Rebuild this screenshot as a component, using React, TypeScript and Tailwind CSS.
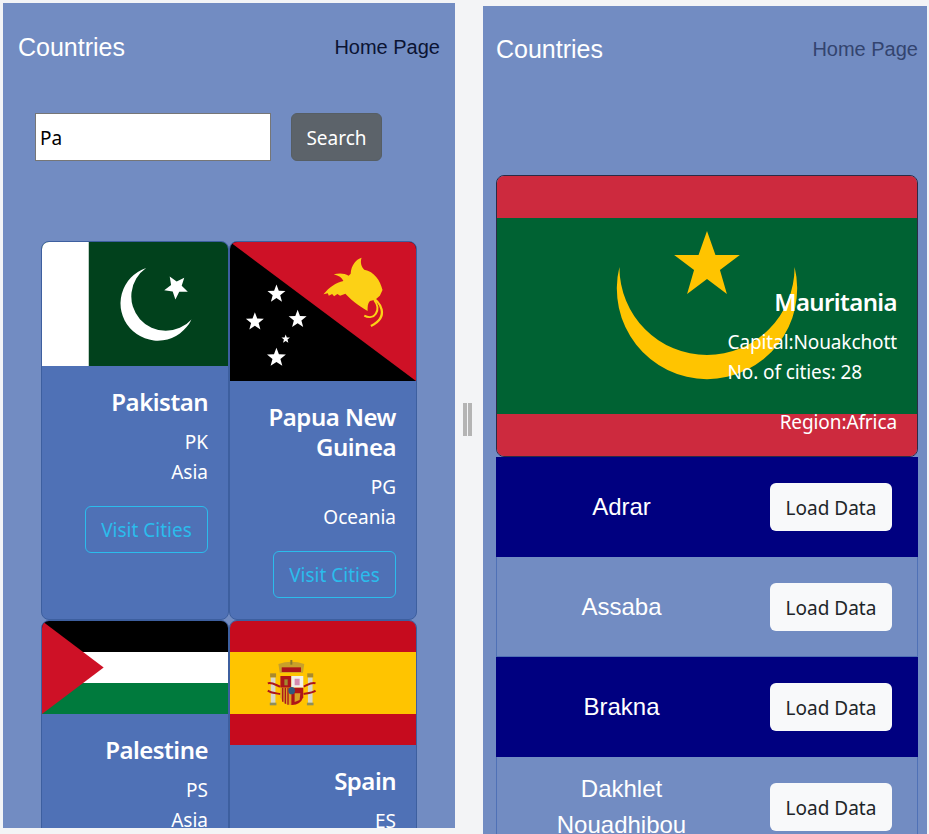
import React from 'react';

const BODY_FONT = "font-['Noto_Sans',sans-serif]";

const starPoints = (cx: number, cy: number, r: number, rot = 0, inner = 0.42) => {
  const pts: string[] = [];
  for (let i = 0; i < 10; i++) {
    const rad = i % 2 === 0 ? r : r * inner;
    const a = ((-90 + rot + i * 36) * Math.PI) / 180;
    pts.push(`${(cx + rad * Math.cos(a)).toFixed(2)},${(cy + rad * Math.sin(a)).toFixed(2)}`);
  }
  return pts.join(' ');
};

const PakistanFlag = () => (
  <svg viewBox="0 0 187 125" className="block w-full h-[124px]" preserveAspectRatio="none">
    <rect width="187" height="125" fill="#01411c" />
    <rect width="47" height="125" fill="#fff" />
    <path d="M104.7 26.3A37.5 37.5 0 1 0 150.3 78A34.7 34.7 0 1 1 104.7 26.3Z" fill="#fff" />
    <polygon points={starPoints(135, 45.5, 12.5, 40, 0.45)} fill="#fff" />
  </svg>
);

const PapuaFlag = () => (
  <svg viewBox="0 0 187 139" className="block w-full h-[139px]" preserveAspectRatio="none">
    <rect width="187" height="139" fill="#000" />
    <polygon points="0,0 187,0 187,139" fill="#ce1126" />
    <polygon points={starPoints(46.7, 52, 9.5)} fill="#fff" />
    <polygon points={starPoints(25, 79.7, 9.5)} fill="#fff" />
    <polygon points={starPoints(68, 77.3, 9.5)} fill="#fff" />
    <polygon points={starPoints(56, 97, 4.5)} fill="#fff" />
    <polygon points={starPoints(46.7, 115.7, 10)} fill="#fff" />
    <g transform="translate(70 3) scale(0.3333)">
      <path
        d="M187 38C172 42 155 60 154 86L148 92C135 84 118 84 103 88C118 92 128 98 132 108C110 112 88 128 72 148L85 145L88 152L98 147L104 154L114 147L122 152L138 146C150 160 175 180 205 198C205 185 205 175 212 168L228 164L242 152L250 135C243 105 225 80 195 74C186 65 182 50 187 38Z"
        fill="#fcd116"
      />
      <path d="M212 155C245 168 272 215 215 243" fill="none" stroke="#fcd116" strokeWidth="7" />
      <path d="M195 212C225 228 248 195 225 165" fill="none" stroke="#fcd116" strokeWidth="6" />
    </g>
  </svg>
);

const PalestineFlag = () => (
  <svg viewBox="0 0 187 93" className="block w-full h-[93px]" preserveAspectRatio="none">
    <rect width="187" height="31" fill="#000" />
    <rect y="31" width="187" height="31" fill="#fff" />
    <rect y="62" width="187" height="31" fill="#007a3d" />
    <polygon points="0,0 62,46.5 0,93" fill="#ce1126" />
  </svg>
);

const SpainFlag = () => (
  <svg viewBox="0 0 187 124" className="block w-full h-[124px]" preserveAspectRatio="none">
    <rect width="187" height="124" fill="#c60b1e" />
    <rect y="31" width="187" height="62" fill="#ffc400" />
    <g transform="translate(20 19) scale(0.3333)">
      <rect x="63" y="112" width="14" height="78" fill="#d8d8c8" />
      <rect x="175" y="112" width="14" height="78" fill="#d8d8c8" />
      <rect x="61" y="100" width="18" height="12" fill="#a98a2c" />
      <rect x="173" y="100" width="18" height="12" fill="#a98a2c" />
      <rect x="60" y="188" width="20" height="8" fill="#8f8f5a" />
      <rect x="172" y="188" width="20" height="8" fill="#8f8f5a" />
      <path d="M54 130C66 126 80 136 92 140M54 152C66 160 80 160 92 162" fill="none" stroke="#ad1519" strokeWidth="6" />
      <path d="M198 130C186 126 172 136 162 140M198 152C186 160 172 160 162 162" fill="none" stroke="#ad1519" strokeWidth="6" />
      <path d="M86 72Q125 58 164 72L160 98H90Z" fill="#c8a02a" />
      <rect x="96" y="82" width="58" height="14" fill="#ad1519" />
      <rect x="122" y="60" width="6" height="14" fill="#8a7a2a" />
      <rect x="92" y="108" width="33" height="35" fill="#ad1519" />
      <rect x="104" y="118" width="10" height="18" fill="#a08a30" />
      <rect x="125" y="108" width="36" height="35" fill="#f1f0ea" />
      <path d="M135 116H150V136H135Z" fill="#d58bb0" />
      <path d="M92 143H125V195Q100 196 92 172Z" fill="#d8a021" />
      <path d="M99 143V185M107 143V191M115 143V194" stroke="#ad1519" strokeWidth="4" />
      <path d="M125 143H161V172Q152 196 125 195Z" fill="#ad1519" />
      <path d="M135 160L152 160L150 180L135 186Z" fill="#d8a021" />
      <ellipse cx="126" cy="152" rx="10" ry="11" fill="#2f5a7f" />
    </g>
  </svg>
);

const MauritaniaFlag = () => (
  <svg viewBox="0 0 422 280" className="absolute inset-0 w-full h-full" preserveAspectRatio="none">
    <rect width="422" height="280" fill="#cd2a3e" />
    <rect y="42" width="422" height="196" fill="#006233" />
    <path d="M123 91A90.6 90.6 0 1 0 299 91A88 88 0 0 1 123 91Z" fill="#ffc400" />
    <polygon
      points="211,55 219.5,79 244,79 224,94 231,118 211,103 191,118 198,94 178,79 202.5,79"
      fill="#ffc400"
    />
  </svg>
);

const countries = [
  { name: 'Pakistan', code: 'PK', region: 'Asia', flag: <PakistanFlag /> },
  { name: 'Papua New Guinea', code: 'PG', region: 'Oceania', flag: <PapuaFlag /> },
  { name: 'Palestine', code: 'PS', region: 'Asia', flag: <PalestineFlag /> },
  { name: 'Spain', code: 'ES', region: 'Europe', flag: <SpainFlag /> },
];

const cities = ['Adrar', 'Assaba', 'Brakna', 'Dakhlet Nouadhibou'];

const Header = ({ linkClass }: { linkClass: string }) => (
  <div className="flex items-center justify-between font-['Liberation_Sans',sans-serif]">
    <span className="text-[25px] leading-[30px] text-white">Countries</span>
    <a href="#" className={`text-[20px] leading-[30px] ${linkClass}`}>
      Home Page
    </a>
  </div>
);

const CountryCard = ({ name, code, region, flag }: (typeof countries)[number]) => (
  <div className="bg-[#4f71b6] border border-[#3d5f9f] rounded-lg overflow-hidden">
    {flag}
    <div className="px-5 pt-[21px] pb-[21px] text-right text-white">
      <h5 className="text-[24px] leading-[30px] font-semibold tracking-[-0.5px] mb-[10px]">{name}</h5>
      <p className="text-[19px] leading-[30px]">{code}</p>
      <p className="text-[19px] leading-[30px]">{region}</p>
      <button className="mt-[19px] w-[123px] h-[47px] pt-[2px] border border-[#2bbcec] rounded-md text-[19px] text-[#2bbcec]">
        Visit Cities
      </button>
    </div>
  </div>
);

export default function App() {
  return (
    <div className={`flex h-screen overflow-hidden bg-[#f3f4f6] ${BODY_FONT}`}>
      {/* left pane */}
      <div className="ml-[3px] mt-[3px] mb-[6px] w-[452px] shrink-0 overflow-hidden bg-[#728cc2]">
        <div className="h-[88px] flex flex-col justify-center pl-[15px] pr-[15px]">
          <Header linkClass="text-[#0b1433]" />
        </div>
        <div className="mt-[22px] ml-[32px] flex gap-5">
          <input
            readOnly
            value="Pa"
            className="w-[236px] h-[48px] bg-white border border-[#767676] px-1 pt-[2px] text-[19px] text-black outline-none"
          />
          <button className="w-[91px] h-[48px] pt-[2px] bg-[#5c636a] border border-[#565e64] rounded-md text-[19px] text-white">
            Search
          </button>
        </div>
        <div className="mt-[80px] ml-[38px] w-[376px] grid grid-cols-2 items-stretch">
          {countries.map((c) => (
            <CountryCard key={c.code} {...c} />
          ))}
        </div>
      </div>

      {/* drag handle */}
      <div className="w-[28px] shrink-0 flex items-center justify-center pt-[5px]">
        <div className="flex gap-[1px] h-[33px] mr-[4px]">
          <div className="w-[4px] bg-[#b4b4b4]" />
          <div className="w-[4px] bg-[#b4b4b4]" />
        </div>
      </div>

      {/* right pane */}
      <div className="mt-[6px] w-[444px] shrink-0 overflow-hidden bg-[#728cc2] pl-[13px] pr-[9px]">
        <div className="h-[86px] flex flex-col justify-center">
          <Header linkClass="text-[#33446f]" />
        </div>
        <div className="mt-[83px] relative h-[282px] border border-[#2b2b45] rounded-lg overflow-hidden">
          <MauritaniaFlag />
          <div className="relative pt-[111px] pr-5 flex flex-col items-end text-white">
            <h5 className="text-[24px] leading-[30px] font-semibold tracking-[-0.6px] mb-[10px]">Mauritania</h5>
            <div className="text-[19px] leading-[30px] tracking-[-0.1px]">
              <p>Capital:Nouakchott</p>
              <p>No. of cities: 28</p>
            </div>
            <p className="mt-[20px] text-[19px] leading-[30px] tracking-[-0.1px]">Region:Africa</p>
          </div>
        </div>
        {cities.map((city, i) => (
          <div
            key={city}
            className={`h-[100px] flex items-center border-b border-x ${
              i % 2 === 0 ? 'bg-[#000080] border-[#000080]' : 'bg-[#728cc2] border-[#4f71b6]'
            }`}
          >
            <div className="w-[249px] mr-[2px] px-5 text-center text-[24px] leading-[36px] text-white font-['Liberation_Sans',sans-serif]">
              {city}
            </div>
            <button className="ml-[22px] w-[122px] h-[48px] pt-[3px] bg-[#f8f9fa] rounded-md text-[19px] text-[#212529]">
              Load Data
            </button>
          </div>
        ))}
      </div>
    </div>
  );
}
